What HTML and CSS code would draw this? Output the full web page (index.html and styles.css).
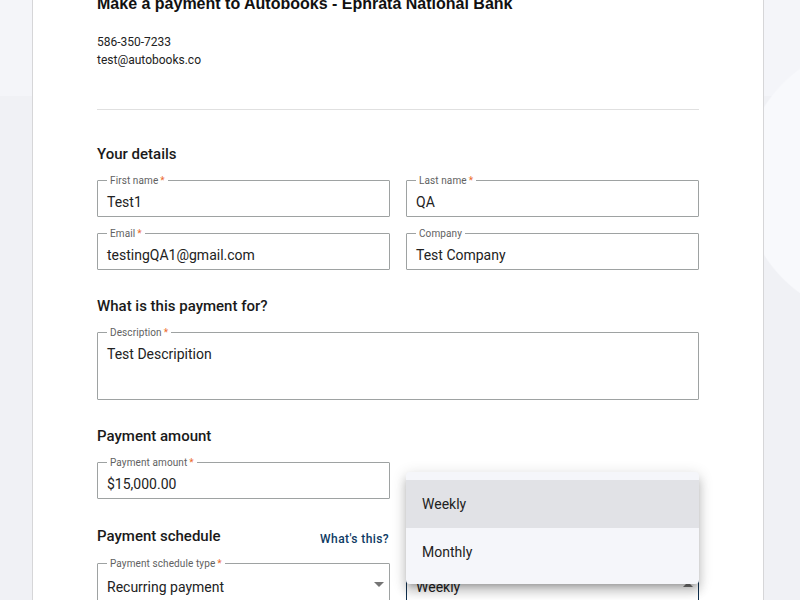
FILE: index.html
```html
<!DOCTYPE html>
<html lang="en">
<head>
<meta charset="utf-8">
<title>Make a payment</title>
<link rel="stylesheet" href="styles.css">
</head>
<body>
<div class="page">
  <main class="card">
    <h1 class="title">Make a payment to Autobooks - Ephrata National Bank</h1>
    <div class="contact">
      <div>586-350-7233</div>
      <div>test@autobooks.co</div>
    </div>
    <hr class="divider">

    <section class="section">
      <h2 class="heading">Your details</h2>
      <div class="grid">
        <fieldset class="field">
          <legend>First name<span class="req">*</span></legend>
          <div class="value">Test1</div>
        </fieldset>
        <fieldset class="field">
          <legend>Last name<span class="req">*</span></legend>
          <div class="value">QA</div>
        </fieldset>
        <fieldset class="field">
          <legend>Email<span class="req">*</span></legend>
          <div class="value">testingQA1@gmail.com</div>
        </fieldset>
        <fieldset class="field">
          <legend>Company</legend>
          <div class="value">Test Company</div>
        </fieldset>
      </div>
    </section>

    <section class="section">
      <h2 class="heading">What is this payment for?</h2>
      <fieldset class="field">
        <legend>Description<span class="req">*</span></legend>
        <div class="value multi">Test Descripition</div>
      </fieldset>
    </section>

    <section class="section">
      <h2 class="heading">Payment amount</h2>
      <div class="grid">
        <fieldset class="field">
          <legend>Payment amount<span class="req">*</span></legend>
          <div class="value">$15,000.00</div>
        </fieldset>
      </div>
    </section>

    <section class="section schedule-section">
      <div class="grid schedule">
        <div class="heading-row">
          <h2 class="heading">Payment schedule</h2>
          <a class="link" href="#">What's this?</a>
        </div>
        <div></div>
        <fieldset class="field select">
          <legend>Payment schedule type<span class="req">*</span></legend>
          <div class="value">Recurring payment</div>
          <svg class="caret" width="10" height="5" viewBox="0 0 10 5"><path d="M0 0h10L5 5z" fill="#757575"/></svg>
        </fieldset>
        <div class="cell">
          <fieldset class="field select focused">
            <legend>Frequency<span class="req">*</span></legend>
            <div class="value">Weekly</div>
            <svg class="caret" width="10" height="5" viewBox="0 0 10 5"><path d="M0 5h10L5 0z" fill="#757575"/></svg>
          </fieldset>
          <ul class="menu">
            <li class="item active">Weekly</li>
            <li class="item">Monthly</li>
          </ul>
        </div>
      </div>
    </section>
  </main>
</div>
</body>
</html>
```
FILE: styles.css
```css
* { box-sizing: border-box; }
html, body { margin: 0; padding: 0; }
body {
  width: 800px;
  height: 600px;
  overflow: hidden;
  font-family: Roboto, "Liberation Sans", Arial, sans-serif;
  color: #1f1f1f;
  background:
    radial-gradient(circle 139px at 881px 181px, #f8f9fc 99%, transparent 100%),
    linear-gradient(to bottom, #f4f5f9 0, #f4f5f9 96px, #f0f1f5 96px);
}
.page {
  padding: 0 36px 0 32px;
}
.card {
  background: #fff;
  border-left: 1px solid #d6d6d8;
  border-right: 1px solid #d6d6d8;
  padding: 0 64px 40px;
  min-height: 700px;
}
.title {
  margin: -6px 0 0;
  font-family: "Liberation Sans", Arial, sans-serif;
  font-size: 16px;
  line-height: 20px;
  font-weight: 700;
  color: #111;
}
.contact {
  margin-top: 19px;
  font-size: 12px;
  line-height: 18px;
  color: #222;
}
.divider {
  margin: 40px 0 0;
  border: 0;
  border-top: 1px solid #e0e0e0;
  height: 0;
}
.section { margin-top: 26px; }
.section:first-of-type { margin-top: 34px; }
.schedule-section { margin-top: 27px; }
.heading {
  margin: 0 0 10px;
  font-size: 15px;
  line-height: 20px;
  font-weight: 500;
  color: #1a1a1a;
}
.grid {
  display: grid;
  grid-template-columns: 1fr 1fr;
  column-gap: 16px;
  row-gap: 10px;
}
.grid.schedule { row-gap: 11px; }
.field {
  margin: 0;
  padding: 0 9px;
  border: 1px solid #9ea2a2;
  border-radius: 1px;
  min-width: 0;
  position: relative;
}
.field legend {
  padding: 0 3px;
  font-size: 10px;
  line-height: 13px;
  color: #616161;
  letter-spacing: 0.1px;
}
.req {
  color: #ec6b2d;
  margin-left: 2px;
}
.value {
  padding: 5px 0 4px;
  font-size: 14px;
  line-height: 20px;
  color: #222;
}
.value.multi { height: 60px; padding-top: 5px; }
.heading-row {
  display: flex;
  justify-content: space-between;
  align-items: flex-end;
}
.heading-row .heading { margin-bottom: 0; }
.link {
  display: block;
  font-size: 12px;
  line-height: 14px;
  font-weight: 500;
  color: #0d3a63;
  text-decoration: none;
  letter-spacing: 0.4px;
  margin-right: 1px;
}
.select .value { padding-top: 7px; }
.caret {
  position: absolute;
  right: 5px;
  top: 12px;
}
.cell { position: relative; }
.focused { border-color: #10304f; }
.menu {
  position: absolute;
  top: -85px;
  left: 0;
  right: 0;
  margin: 0;
  padding: 8px 0;
  list-style: none;
  background: #f5f6fa;
  border-radius: 4px;
  box-shadow: 0 5px 5px -3px rgba(0,0,0,0.2), 0 8px 10px 1px rgba(0,0,0,0.14), 0 3px 14px 2px rgba(0,0,0,0.12);
}
.item {
  height: 48px;
  line-height: 48px;
  padding: 0 16px;
  font-size: 14px;
  color: #222;
}
.item.active { background: #e1e2e6; }
```
